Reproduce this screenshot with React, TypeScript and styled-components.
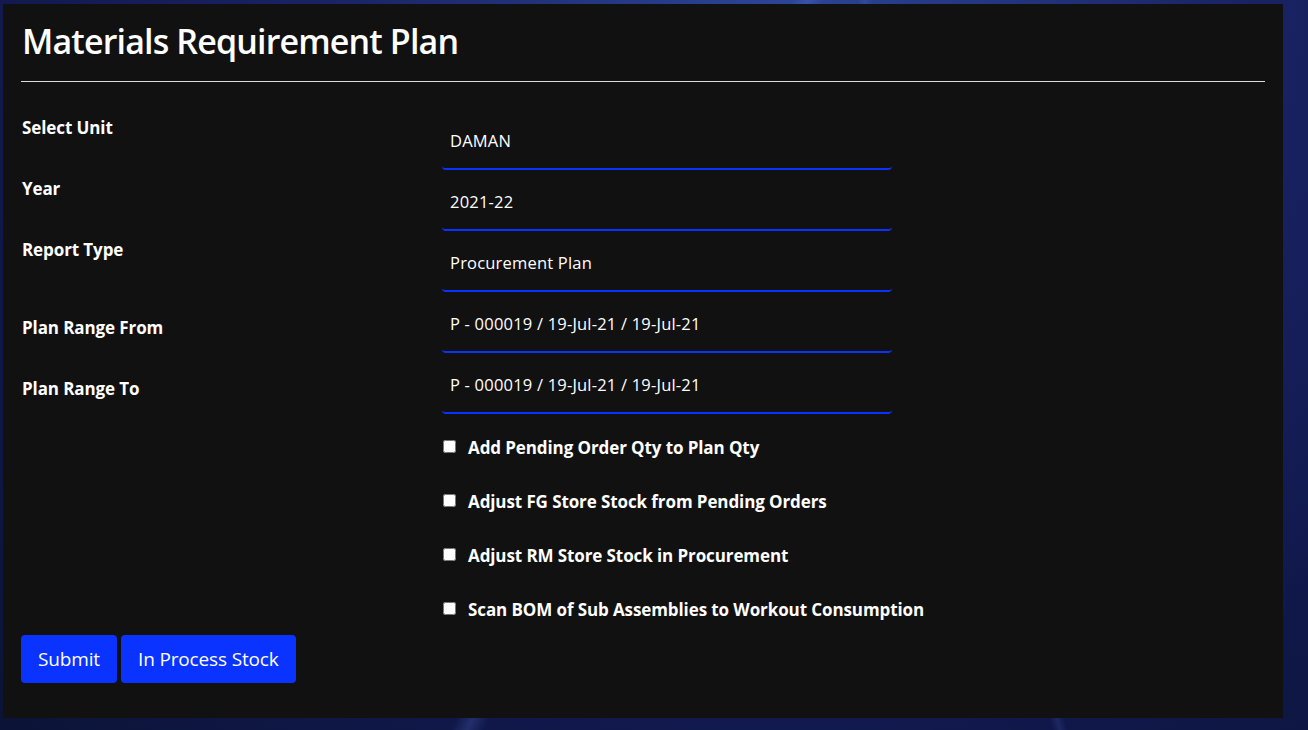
import React from "react";
import styled, { createGlobalStyle } from "styled-components";

const Global = createGlobalStyle`
  html, body { margin: 0; padding: 0; }
  body {
    width: 1308px;
    height: 730px;
    overflow: hidden;
    font-family: "Open Sans", "Noto Sans", sans-serif;
    background:
      linear-gradient(115deg, transparent 48%, rgba(120,150,255,0.18) 49%, transparent 50%),
      linear-gradient(75deg, transparent 70%, rgba(120,150,255,0.12) 70.5%, transparent 71%),
      radial-gradient(ellipse at 60% 0%, #2b4595 0%, #1a2466 40%, #10184a 75%, #0b1436 100%);
  }
`;

const Page = styled.div`
  padding: 4px 25px 12px 3px;
`;

const Panel = styled.main`
  background: #111111;
  width: 1280px;
  height: 714px;
  box-sizing: border-box;
  padding: 0 18px;
  color: #ffffff;
  display: flex;
  flex-direction: column;
`;

const Title = styled.h1`
  margin: 0;
  padding: 15px 0 0 1px;
  font-size: 34px;
  line-height: 44px;
  font-weight: 600;
  letter-spacing: -0.85px;
`;

const Rule = styled.hr`
  margin: 18px 0 0;
  border: 0;
  border-top: 1px solid #dcdcdc;
  height: 0;
`;

const Form = styled.form`
  display: grid;
  grid-template-columns: 421px 450px;
  row-gap: 11px;
  margin-top: 38px;
`;

const Label = styled.label<{ $align: "start" | "center" }>`
  align-self: ${(p) => p.$align};
  margin-top: ${(p) => (p.$align === "start" ? "-4px" : "0")};
  padding-left: 1px;
  font-size: 17px;
  line-height: 24px;
  font-weight: 700;
  letter-spacing: -0.1px;
`;

const Field = styled.div`
  height: 50px;
  box-sizing: border-box;
  padding: 9px 8px 0;
  font-size: 16.5px;
  line-height: 24px;
  border-bottom: 2px solid #0a33ff;
  border-radius: 0 0 4px 4px;
  letter-spacing: 0.2px;
`;

const Checks = styled.div`
  grid-column: 2;
  display: flex;
  flex-direction: column;
  gap: 30px;
  margin-top: 11px;
  width: 560px;
`;

const CheckRow = styled.label`
  display: flex;
  align-items: center;
  gap: 12px;
  font-size: 17px;
  line-height: 24px;
  font-weight: 700;
  letter-spacing: -0.1px;
  white-space: nowrap;
`;

const Box = styled.input`
  margin: 0 0 4px 1px;
  width: 13px;
  height: 13px;
`;

const Actions = styled.div`
  display: flex;
  gap: 4px;
  margin-top: 13px;
`;

const Button = styled.button`
  height: 48px;
  padding: 0 17px;
  border: 0;
  border-radius: 4px;
  background: #0a33ff;
  color: #ffffff;
  font-family: "Open Sans", "Noto Sans", sans-serif;
  font-size: 19px;
  letter-spacing: -0.15px;
`;

const fields = [
  { label: "Select Unit", value: "DAMAN", align: "start" as const },
  { label: "Year", value: "2021-22", align: "start" as const },
  { label: "Report Type", value: "Procurement Plan", align: "start" as const },
  { label: "Plan Range From", value: "P - 000019 / 19-Jul-21 / 19-Jul-21", align: "center" as const },
  { label: "Plan Range To", value: "P - 000019 / 19-Jul-21 / 19-Jul-21", align: "center" as const },
];

const checks = [
  "Add Pending Order Qty to Plan Qty",
  "Adjust FG Store Stock from Pending Orders",
  "Adjust RM Store Stock in Procurement",
  "Scan BOM of Sub Assemblies to Workout Consumption",
];

export default function App() {
  return (
    <>
      <Global />
      <Page>
        <Panel>
          <Title>Materials Requirement Plan</Title>
          <Rule />
          <Form onSubmit={(e) => e.preventDefault()}>
            {fields.map((f) => (
              <React.Fragment key={f.label}>
                <Label $align={f.align}>{f.label}</Label>
                <Field>{f.value}</Field>
              </React.Fragment>
            ))}
            <Checks>
              {checks.map((c) => (
                <CheckRow key={c}>
                  <Box type="checkbox" />
                  {c}
                </CheckRow>
              ))}
            </Checks>
          </Form>
          <Actions>
            <Button type="button">Submit</Button>
            <Button type="button">In Process Stock</Button>
          </Actions>
        </Panel>
      </Page>
    </>
  );
}
